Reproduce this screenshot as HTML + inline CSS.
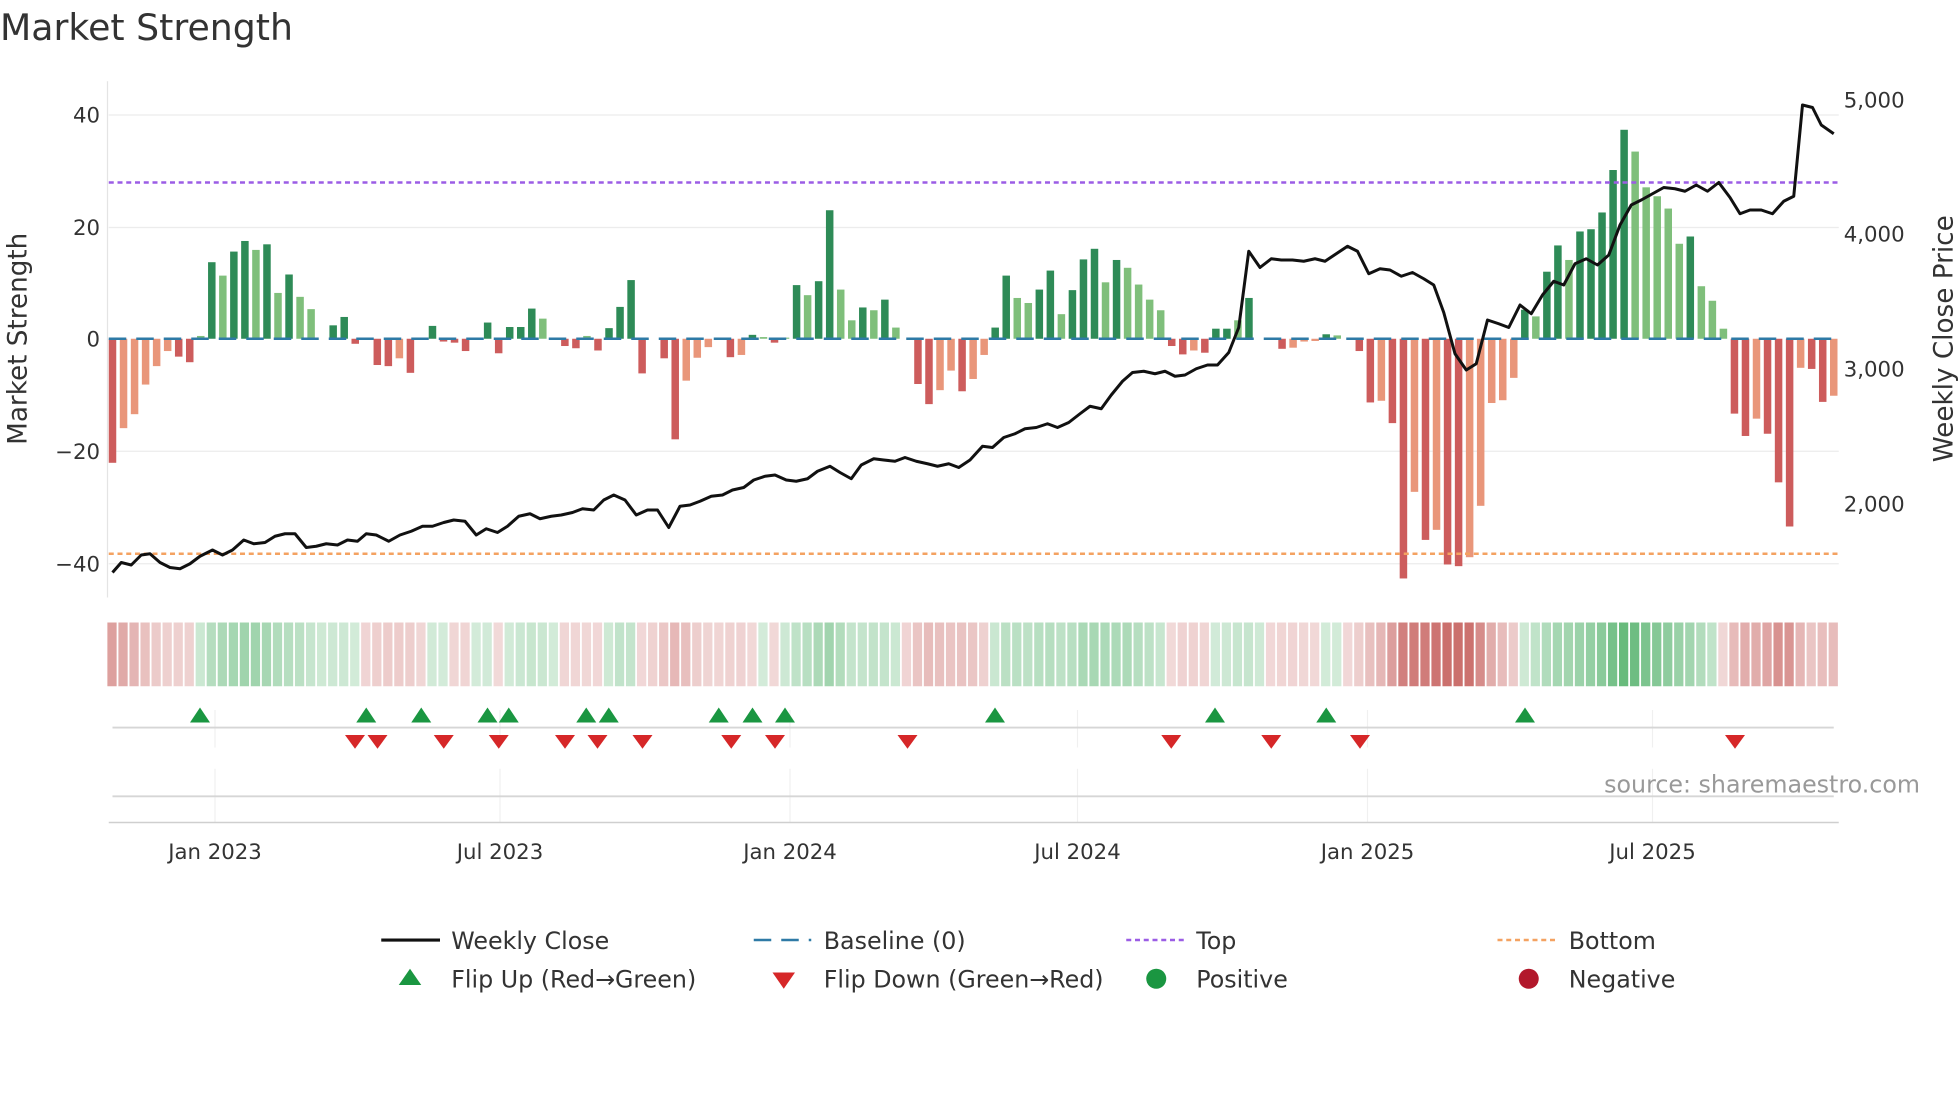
<!DOCTYPE html>
<html><head><meta charset="utf-8"><style>
html,body{margin:0;padding:0;background:#fff;width:1960px;height:1102px;overflow:hidden}
svg text{font-family:"DejaVu Sans","Liberation Sans",sans-serif;fill:#333}
</style></head><body>
<svg id="s" width="1960" height="1102" viewBox="0 0 1568 881.6" xmlns="http://www.w3.org/2000/svg">
<text x="0" y="32" font-size="29" fill="#333">Market Strength</text>
<g stroke="#ececec" stroke-width="1">
<line x1="87" y1="92" x2="1471" y2="92"/><line x1="87" y1="182" x2="1471" y2="182"/>
<line x1="87" y1="361" x2="1471" y2="361"/><line x1="87" y1="451" x2="1471" y2="451"/>
</g>
<line x1="86" y1="65" x2="86" y2="478" stroke="#e4e4e4"/>
<g font-size="17" text-anchor="end">
<text x="80" y="98">40</text><text x="80" y="188">20</text><text x="80" y="277">0</text>
<text x="80" y="367">−20</text><text x="80" y="457">−40</text></g>
<g font-size="17"><text x="1475" y="86">5,000</text><text x="1475" y="193">4,000</text><text x="1475" y="301">3,000</text><text x="1475" y="409">2,000</text></g>
<text transform="translate(21,271) rotate(-90)" font-size="21" text-anchor="middle">Market Strength</text>
<text transform="translate(1562,271) rotate(-90)" font-size="21" text-anchor="middle">Weekly Close Price</text>
<g id="bars"></g>
<line x1="87" y1="146" x2="1471" y2="146" stroke="#9b5de5" stroke-width="2" stroke-dasharray="4,3"/>
<line x1="87" y1="443" x2="1471" y2="443" stroke="#f4a261" stroke-width="2" stroke-dasharray="4,3"/>
<polyline id="price" fill="none" stroke="#111" stroke-width="2.4" stroke-linejoin="round"/>
<g id="strip"></g>
<g stroke="#f0f0f0"><line x1="172" y1="568" x2="172" y2="598"/><line x1="400" y1="568" x2="400" y2="598"/><line x1="632" y1="568" x2="632" y2="598"/><line x1="862" y1="568" x2="862" y2="598"/><line x1="1094" y1="568" x2="1094" y2="598"/><line x1="1322" y1="568" x2="1322" y2="598"/>
<line x1="172" y1="615" x2="172" y2="658"/><line x1="400" y1="615" x2="400" y2="658"/><line x1="632" y1="615" x2="632" y2="658"/><line x1="862" y1="615" x2="862" y2="658"/><line x1="1094" y1="615" x2="1094" y2="658"/><line x1="1322" y1="615" x2="1322" y2="658"/></g>
<line x1="90" y1="582" x2="1467" y2="582" stroke="#d6d6d6" stroke-width="1.5"/>
<line x1="90" y1="637" x2="1467" y2="637" stroke="#d6d6d6" stroke-width="1.5"/>
<line x1="87" y1="658" x2="1471" y2="658" stroke="#cfcfcf" stroke-width="1.2"/>
<g id="marks"></g>
<text x="1536" y="634" font-size="19" text-anchor="end" fill="#999" style="fill:#999">source: sharemaestro.com</text>
<g font-size="17" text-anchor="middle"><text x="172" y="687">Jan 2023</text><text x="400" y="687">Jul 2023</text><text x="632" y="687">Jan 2024</text><text x="862" y="687">Jul 2024</text><text x="1094" y="687">Jan 2025</text><text x="1322" y="687">Jul 2025</text></g>
<g font-size="19">
<line x1="305" y1="752" x2="352" y2="752" stroke="#111" stroke-width="2.5"/><text x="361" y="759">Weekly Close</text>
<line x1="603" y1="752" x2="649" y2="752" stroke="#2e7aa6" stroke-width="2" stroke-dasharray="14,8"/><text x="659" y="759">Baseline (0)</text>
<line x1="901" y1="752" x2="947" y2="752" stroke="#9b5de5" stroke-width="2" stroke-dasharray="4,3"/><text x="957" y="759">Top</text>
<line x1="1198" y1="752" x2="1244" y2="752" stroke="#f4a261" stroke-width="2" stroke-dasharray="4,3"/><text x="1255" y="759">Bottom</text>
<polygon points="319,788 328,775 337,788" fill="#1a9641"/><text x="361" y="790">Flip Up (Red→Green)</text>
<polygon points="618,778 636,778 627,791" fill="#d62728"/><text x="659" y="790">Flip Down (Green→Red)</text>
<circle cx="925" cy="783" r="8" fill="#1a9641"/><text x="957" y="790">Positive</text>
<circle cx="1223" cy="783" r="8" fill="#b2182b"/><text x="1255" y="790">Negative</text>
</g>
</svg>
<script>
var d="R-22.2 S-16 S-13.5 S-8.2 S-4.9 S-2.2 R-3.2 R-4.2 L0.5 D13.7 L11.3 D15.6 D17.5 L15.9 D16.9 L8.2 D11.5 L7.5 L5.3 D0 D2.4 D3.9 R-0.9 R0 R-4.7 R-4.9 S-3.5 R-6.1 R0 D2.3 R-0.5 R-0.7 R-2.2 R0 D2.9 R-2.6 D2.1 D2.1 D5.4 L3.6 L0 R-1.3 R-1.7 L0.5 R-2.1 D1.9 D5.7 D10.5 R-6.2 R0 R-3.5 R-18 S-7.5 S-3.4 S-1.5 R0 R-3.3 S-2.9 D0.7 L0.3 R-0.7 L0.2 D9.6 L7.8 D10.3 D23 L8.8 L3.3 D5.6 L5.1 D7 L2 L0 R-8.1 R-11.7 S-9.2 S-5.7 R-9.4 S-7.2 S-2.9 D2 D11.3 L7.3 L6.4 D8.8 D12.2 L4.4 D8.7 D14.2 D16.1 L10.1 D14.1 L12.7 L9.7 L7 L5.1 R-1.3 R-2.8 S-2.1 R-2.5 D1.8 D1.8 L3.3 D7.3 L0 L0 R-1.8 S-1.6 S-0.5 S-0.4 D0.8 L0.6 L0 R-2.2 R-11.4 S-11.1 R-15.1 R-42.9 S-27.4 R-36 S-34.2 R-40.4 R-40.7 S-39.1 S-29.9 S-11.5 S-11 S-7 D5.2 L4 D12 D16.7 L14.1 D19.2 D19.6 D22.6 D30.2 D37.4 L33.5 L27.1 L25.5 L23.3 L17 D18.3 L9.4 L6.8 L1.8 R-13.4 R-17.4 S-14.3 R-17 R-25.7 R-33.6 S-5.2 R-5.4 R-11.3 S-10.2".split(" ");
var col={D:"#2e8b57",L:"#7fbf7b",R:"#cd5c5c",S:"#e9967a"};
var ns="http://www.w3.org/2000/svg";
function el(n,a,p){var e=document.createElementNS(ns,n);for(var k in a)e.setAttribute(k,a[k]);document.getElementById(p).appendChild(e);return e;}
var N=d.length,x0=90,dx=(1467-90)/(N-1),k=4.47;
var vals=[];
for(var i=0;i<N;i++){var t=d[i][0],v=parseFloat(d[i].slice(1));vals.push(v);var x=x0+i*dx;
 if(v!==0){var h=Math.abs(v)*k;el("rect",{x:x-3,y:v>0?271-h:271,width:6,height:h,fill:col[t]},"bars");}}
el("line",{x1:87,y1:271,x2:1471,y2:271,stroke:"#2e7aa6","stroke-width":2,"stroke-dasharray":"14,8"},"bars");
var last=1;
for(var i=0;i<N;i++){var v=vals[i];var s=(vals[Math.max(0,i-1)]+2*v+vals[Math.min(N-1,i+1)])/4;
 var sg=s>0?1:(s<0?-1:last);last=sg;var a=0.22+0.6*Math.min(Math.abs(s)/38,1);
 el("rect",{x:x0+i*dx-4.1,y:498,width:7.4,height:51,fill:sg>0?"#3aa655":"#c0504d","fill-opacity":a},"strip");}
var P="90,458 97,450 105,452 113,444 120,443 128,450 136,454 144,455 152,451 160,445 170,440 178,444 186,440 195,432 203,435 212,434 220,429 228,427 236,427 245,438 253,437 261,435 270,436 278,432 286,433 293,427 301,428 311,433 320,428 329,425 338,421 346,421 355,418 363,416 372,417 381,428 389,423 398,426 406,421 415,413 424,411 432,415 441,413 449,412 458,410 466,407 475,408 483,400 491,396 500,400 509,412 518,408 526,408 535,422 544,405 552,404 560,401 569,397 578,396 586,392 595,390 603,384 612,381 620,380 629,384 637,385 646,383 654,377 664,373 672,378 681,383 689,372 699,367 707,368 716,369 724,366 733,369 742,371 750,373 759,371 767,374 776,368 786,357 794,358 803,350 812,347 820,343 829,342 838,339 846,342 855,338 864,331 872,325 881,327 889,316 898,305 906,298 915,297 924,299 932,297 940,301 948,300 957,295 966,292 974,292 983,282 991,262 999,201 1008,214 1017,207 1025,208 1034,208 1043,209 1052,207 1060,209 1069,203 1078,197 1086,201 1095,219 1104,215 1112,216 1121,221 1130,218 1139,223 1147,228 1155,250 1164,283 1173,296 1181,291 1190,256 1199,259 1207,262 1216,244 1225,251 1234,236 1243,225 1251,228 1260,211 1269,207 1278,212 1287,204 1296,180 1305,164 1313,160 1322,155 1331,150 1340,151 1348,153 1357,148 1366,153 1375,146 1384,158 1392,171 1400,168 1409,168 1418,171 1427,161 1435,157 1442,84 1450,86 1457,100 1467,107";
document.getElementById("price").setAttribute("points",P);
[160,293,337,390,407,469,487,575,602,628,796,972,1061,1220].forEach(function(x){el("polygon",{points:(x-8)+",578 "+x+",566 "+(x+8)+",578",fill:"#1a9641"},"marks");});
[284,302,355,399,452,478,514,585,620,726,937,1017,1088,1388].forEach(function(x){el("polygon",{points:(x-8)+",588 "+(x+8)+",588 "+x+",599",fill:"#d62728"},"marks");});
</script>
</body></html>
